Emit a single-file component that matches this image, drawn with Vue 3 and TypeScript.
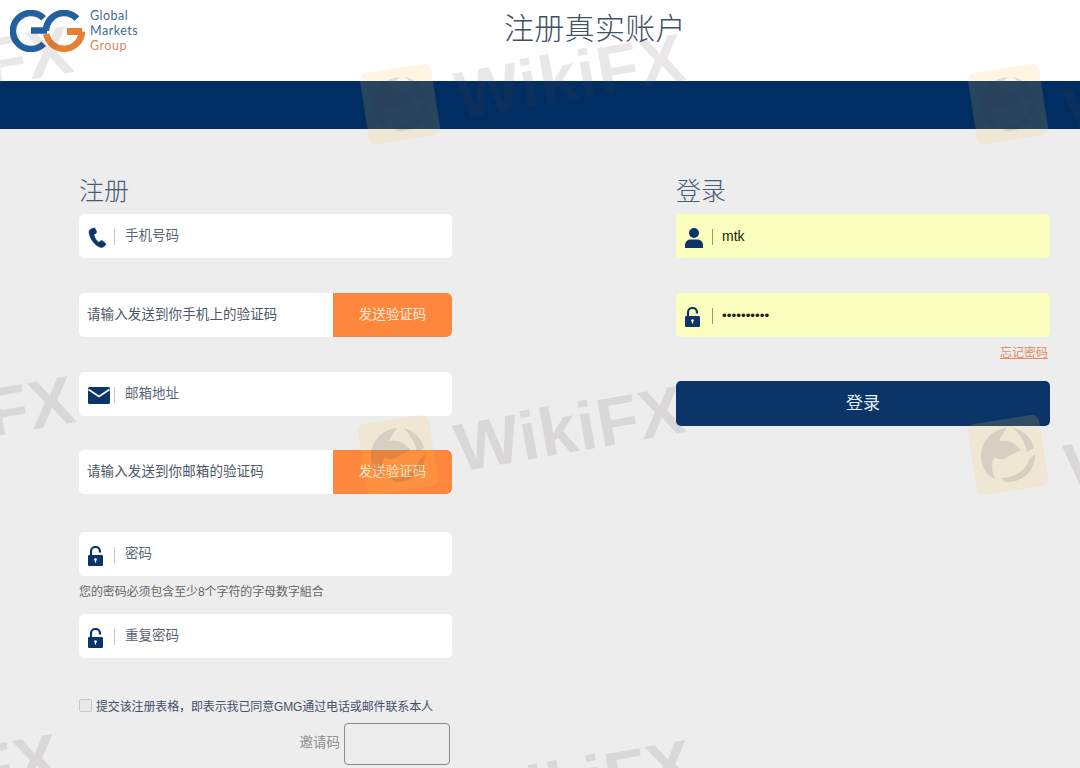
<script setup lang="ts">
interface Mark { x: number; y: number }
const words: Mark[] = [
  { x: -42, y: 68 }, { x: 570, y: 76 }, { x: 1180, y: 92 },
  { x: -40, y: 418 }, { x: 570, y: 428 }, { x: 1180, y: 448 },
  { x: -55, y: 776 }, { x: 578, y: 782 },
]
const seals: Mark[] = [
  { x: 400, y: 104 }, { x: 1008, y: 104 }, { x: 398, y: 455 }, { x: 1008, y: 455 },
]
</script>

<template>
  <div class="page">
    <header class="top">
      <div class="logo">
        <svg class="logo-mark" viewBox="0 0 76 42" width="76" height="42" fill="none" stroke-width="6.500">
          <path d="M33.7 8.300A18 18 0 1 0 33.700 33.700" stroke="#23609f" />
          <path d="M21 20.500H37" stroke="#23609f" />
          <path d="M36.300 24A18 18 0 0 0 72 21.500" stroke="#e77f35" />
          <path d="M72 21.500H57" stroke="#e77f35" stroke-width="7" />
          <path d="M36 21A18 18 0 0 1 67 8.500" stroke="#23609f" />
        </svg>
        <div class="logo-text">
          <span>Global</span>
          <span>Markets</span>
          <span class="logo-orange">Group</span>
        </div>
      </div>
      <h1 class="title">注册真实账户</h1>
    </header>
    <div class="band"></div>

    <main class="content">
      <section class="col">
        <h2 class="heading">注册</h2>

        <div class="field gap-35">
          <span class="icon">
            <svg viewBox="0 0 20 22" width="19" height="21">
              <path fill="#0b3569" stroke="#0b3569" stroke-width=".8" stroke-linejoin="round" d="M5.600 1.200 2.900 2.300C1.300 3 .9 4.700 1.300 6.600c1 5.300 4.700 10.900 9.400 13.700 2 1.200 4 1.500 5.600.4l1.900-1.500c.7-.6.700-1.500 0-2.100l-2.900-2.400c-.6-.5-1.400-.5-2 0l-1.200 1c-.4.300-.9.300-1.300 0-2.200-1.700-3.900-4.500-4.600-7.200-.1-.5.100-.9.500-1.100l1.400-.7c.7-.4 1-1.100.8-1.900L7.700 2c-.3-.8-1.300-1.200-2.100-.8Z" />
            </svg>
          </span>
          <span class="sep"></span>
          <span class="hint">手机号码</span>
        </div>

        <div class="field with-btn gap-35">
          <span class="hint code">请输入发送到你手机上的验证码</span>
          <button class="send" type="button">发送验证码</button>
        </div>

        <div class="field gap-34">
          <span class="icon">
            <svg viewBox="0 0 22 17" width="22" height="17">
              <rect width="22" height="17" rx="1.500" fill="#0b3569" />
              <path d="M0.500 2.500 11 9.500 21.500 2.500" fill="none" stroke="#fff" stroke-width="1.600" />
            </svg>
          </span>
          <span class="sep"></span>
          <span class="hint">邮箱地址</span>
        </div>

        <div class="field with-btn gap-38">
          <span class="hint code">请输入发送到你邮箱的验证码</span>
          <button class="send" type="button">发送验证码</button>
        </div>

        <div class="field">
          <span class="icon">
            <svg viewBox="0 0 15 20" width="15" height="20">
              <path d="M3 10V5.500a4.500 4.500 0 0 1 9 0V6.500" fill="none" stroke="#0b3569" stroke-width="2.200" />
              <rect y="9" width="15" height="11" rx="1.200" fill="#0b3569" />
              <circle cx="7.500" cy="13.500" r="1.300" fill="#fff" />
              <rect x="6.900" y="13.500" width="1.200" height="3" fill="#fff" />
            </svg>
          </span>
          <span class="sep"></span>
          <span class="hint">密码</span>
        </div>
        <p class="rule">您的密码必须包含至少8个字符的字母数字組合</p>
        <div class="field">
          <span class="icon">
            <svg viewBox="0 0 15 20" width="15" height="20">
              <path d="M3 10V5.500a4.500 4.500 0 0 1 9 0V6.500" fill="none" stroke="#0b3569" stroke-width="2.200" />
              <rect y="9" width="15" height="11" rx="1.200" fill="#0b3569" />
              <circle cx="7.500" cy="13.500" r="1.300" fill="#fff" />
              <rect x="6.900" y="13.500" width="1.200" height="3" fill="#fff" />
            </svg>
          </span>
          <span class="sep"></span>
          <span class="hint">重复密码</span>
        </div>

        <label class="agree">
          <span class="box"></span>
          <span>提交该注册表格，即表示我已同意GMG通过电话或邮件联系本人</span>
        </label>
        <div class="invite">
          <span class="invite-label">邀请码</span>
          <span class="invite-box"></span>
        </div>
      </section>

      <section class="col">
        <h2 class="heading">登录</h2>

        <div class="field filled gap-35">
          <span class="icon">
            <svg viewBox="0 0 18 20" width="18" height="20">
              <circle cx="9" cy="5" r="5" fill="#0b3569" />
              <path d="M0 20v-3c0-3.500 3-5.500 5.500-5.500h7c2.500 0 5.500 2 5.500 5.500v3Z" fill="#0b3569" />
            </svg>
          </span>
          <span class="sep dark"></span>
          <span class="value">mtk</span>
        </div>

        <div class="field filled">
          <span class="icon">
            <svg viewBox="0 0 15 20" width="15" height="20">
              <path d="M3 10V5.500a4.500 4.500 0 0 1 9 0V6.500" fill="none" stroke="#0b3569" stroke-width="2.200" />
              <rect y="9" width="15" height="11" rx="1.200" fill="#0b3569" />
              <circle cx="7.500" cy="13.500" r="1.300" fill="#fff" />
              <rect x="6.900" y="13.500" width="1.200" height="3" fill="#fff" />
            </svg>
          </span>
          <span class="sep dark"></span>
          <span class="value dots">••••••••••</span>
        </div>

        <div class="forgot-row"><a class="forgot" href="#">忘记密码</a></div>
        <button class="login" type="button">登录</button>
      </section>
    </main>

    <div class="overlay" aria-hidden="true">
      <span v-for="(w, i) in words" :key="'w' + i" class="wm" :style="{ left: w.x + 'px', top: w.y + 'px' }">WikiFX</span>
      <svg v-for="(s, i) in seals" :key="'s' + i" class="seal" viewBox="0 0 90 90" width="90" height="90" :style="{ left: s.x - 45 + 'px', top: s.y - 45 + 'px' }">
        <rect x="9" y="9" width="72" height="72" rx="7" fill="#f6c453" fill-opacity=".16" transform="rotate(-9 45 45)" />
        <g fill="#2c2f4a" fill-opacity=".13">
          <path d="M44 18C30 19 18 31 18 46c0 10 5 19 14 23-4-9-4-17 0-22 3 3 8 3 12 0l14-7-8-7c-4-3-10-3-14-2 2-5 5-9 8-13Z" />
          <path d="M50 18a27 27 0 0 1 21 20l-7 4c-2-10-7-18-14-24Z" />
          <path d="M72 44a27 27 0 0 1-30 28l-4-4c12 0 24-6 28-18l6-6Z" />
        </g>
      </svg>
    </div>
  </div>
</template>

<style>
html, body { margin: 0; background: #ededed; }
</style>

<style scoped>
.page {
  position: relative;
  width: 1080px;
  height: 768px;
  overflow: hidden;
  background: #ededed;
  font-family: "Liberation Sans", "Noto Sans CJK SC", sans-serif;
}
.top {
  display: flex;
  height: 81px;
  background: #fff;
  box-sizing: border-box;
  padding: 10px 0 0 10px;
}
.logo { display: flex; gap: 4px; width: 130px; height: 42px; }
.logo-mark { flex: none; }
.logo-text {
  display: flex;
  flex-direction: column;
  font: 12.500px/15px Lato, sans-serif;
  letter-spacing: .5px;
  color: #3f6a97;
  margin-top: -2px;
}
.logo-orange { color: #d98a60; }
.title {
  margin: -1px 0 0 364px;
  font-size: 30px;
  line-height: 40px;
  font-weight: 300;
  letter-spacing: .3px;
  color: #3f5064;
}
.band { height: 48px; background: #002d62; }
.content {
  display: flex;
  gap: 224px;
  padding: 44px 30px 0 79px;
}
.col { width: 373px; display: flex; flex-direction: column; }
.col + .col { width: 374px; }
.heading {
  margin: 0 0 5px;
  font-size: 25px;
  line-height: 36px;
  font-weight: 300;
  color: #475b75;
}
.field {
  display: flex;
  align-items: center;
  height: 44px;
  flex: none;
  background: #fff;
  border-radius: 5px;
  overflow: hidden;
  font-size: 13.500px;
}
.gap-35 { margin-bottom: 35px; }
.gap-34 { margin-bottom: 34px; }
.gap-38 { margin-bottom: 38px; }
.filled { background: #faffbd; }
.icon {
  display: flex;
  justify-content: flex-start;
  width: 22px;
  margin: 3px 4px 0 9px;
}
.filled .icon { width: 23px; }
.sep {
  width: 1px;
  height: 16px;
  margin: 2px 10px 0 0;
  background: #c9c9c9;
}
.sep.dark { background: #9a9a70; margin-right: 9px; }
.hint { color: #5a6675; margin-top: -4px; }
.code { margin: -5px 0 0 8px; color: #4c5866; flex: 1; letter-spacing: .1px; }
.send {
  width: 119px;
  height: 100%;
  padding: 0 0 5px;
  border: 0;
  border-radius: 0 5px 5px 0;
  background: #ff873d;
  color: #ffe9d8;
  font: inherit;
}
.value { color: #1c2410; font-size: 14px; }
.dots { font-size: 13.500px; }
.rule {
  margin: 0;
  height: 38px;
  font-size: 12px;
  line-height: 32px;
  letter-spacing: -.1px;
  color: #666;
}
.agree {
  display: flex;
  align-items: center;
  gap: 4px;
  margin-top: 38px;
  height: 18px;
  font-size: 12px;
  letter-spacing: -.13px;
  color: #3f5069;
}
.box {
  width: 11px;
  height: 11px;
  border: 1px solid #c8c8c8;
  border-radius: 2px;
  background: #e9e9e9;
}
.invite {
  display: flex;
  align-items: center;
  justify-content: flex-end;
  gap: 4px;
  margin-top: 9px;
  padding-right: 2px;
}
.invite-label { font-size: 13.500px; color: #8f8f8f; margin-top: -6px; }
.invite-box {
  width: 104px;
  height: 40px;
  border: 1px solid #8c8c8c;
  border-radius: 4px;
}
.forgot-row {
  display: flex;
  justify-content: flex-end;
  height: 44px;
  padding: 8px 2px 0 0;
  box-sizing: border-box;
}
.forgot {
  height: 17px;
  font-size: 12px;
  line-height: 17px;
  color: #e08a5c;
}
.login {
  height: 45px;
  padding: 0 0 5px;
  border: 0;
  border-radius: 5px;
  background: #0b3569;
  color: #e4edf6;
  font: 17px "Liberation Sans", "Noto Sans CJK SC", sans-serif;
}
.overlay {
  position: absolute;
  inset: 0;
  pointer-events: none;
}
.wm {
  position: absolute;
  transform: translate(-50%, -50%) rotate(-10deg);
  font-size: 68px;
  line-height: 1;
  font-weight: 700;
  letter-spacing: 1px;
  color: rgba(85, 70, 70, .13);
  white-space: nowrap;
}
.seal { position: absolute; }
</style>
